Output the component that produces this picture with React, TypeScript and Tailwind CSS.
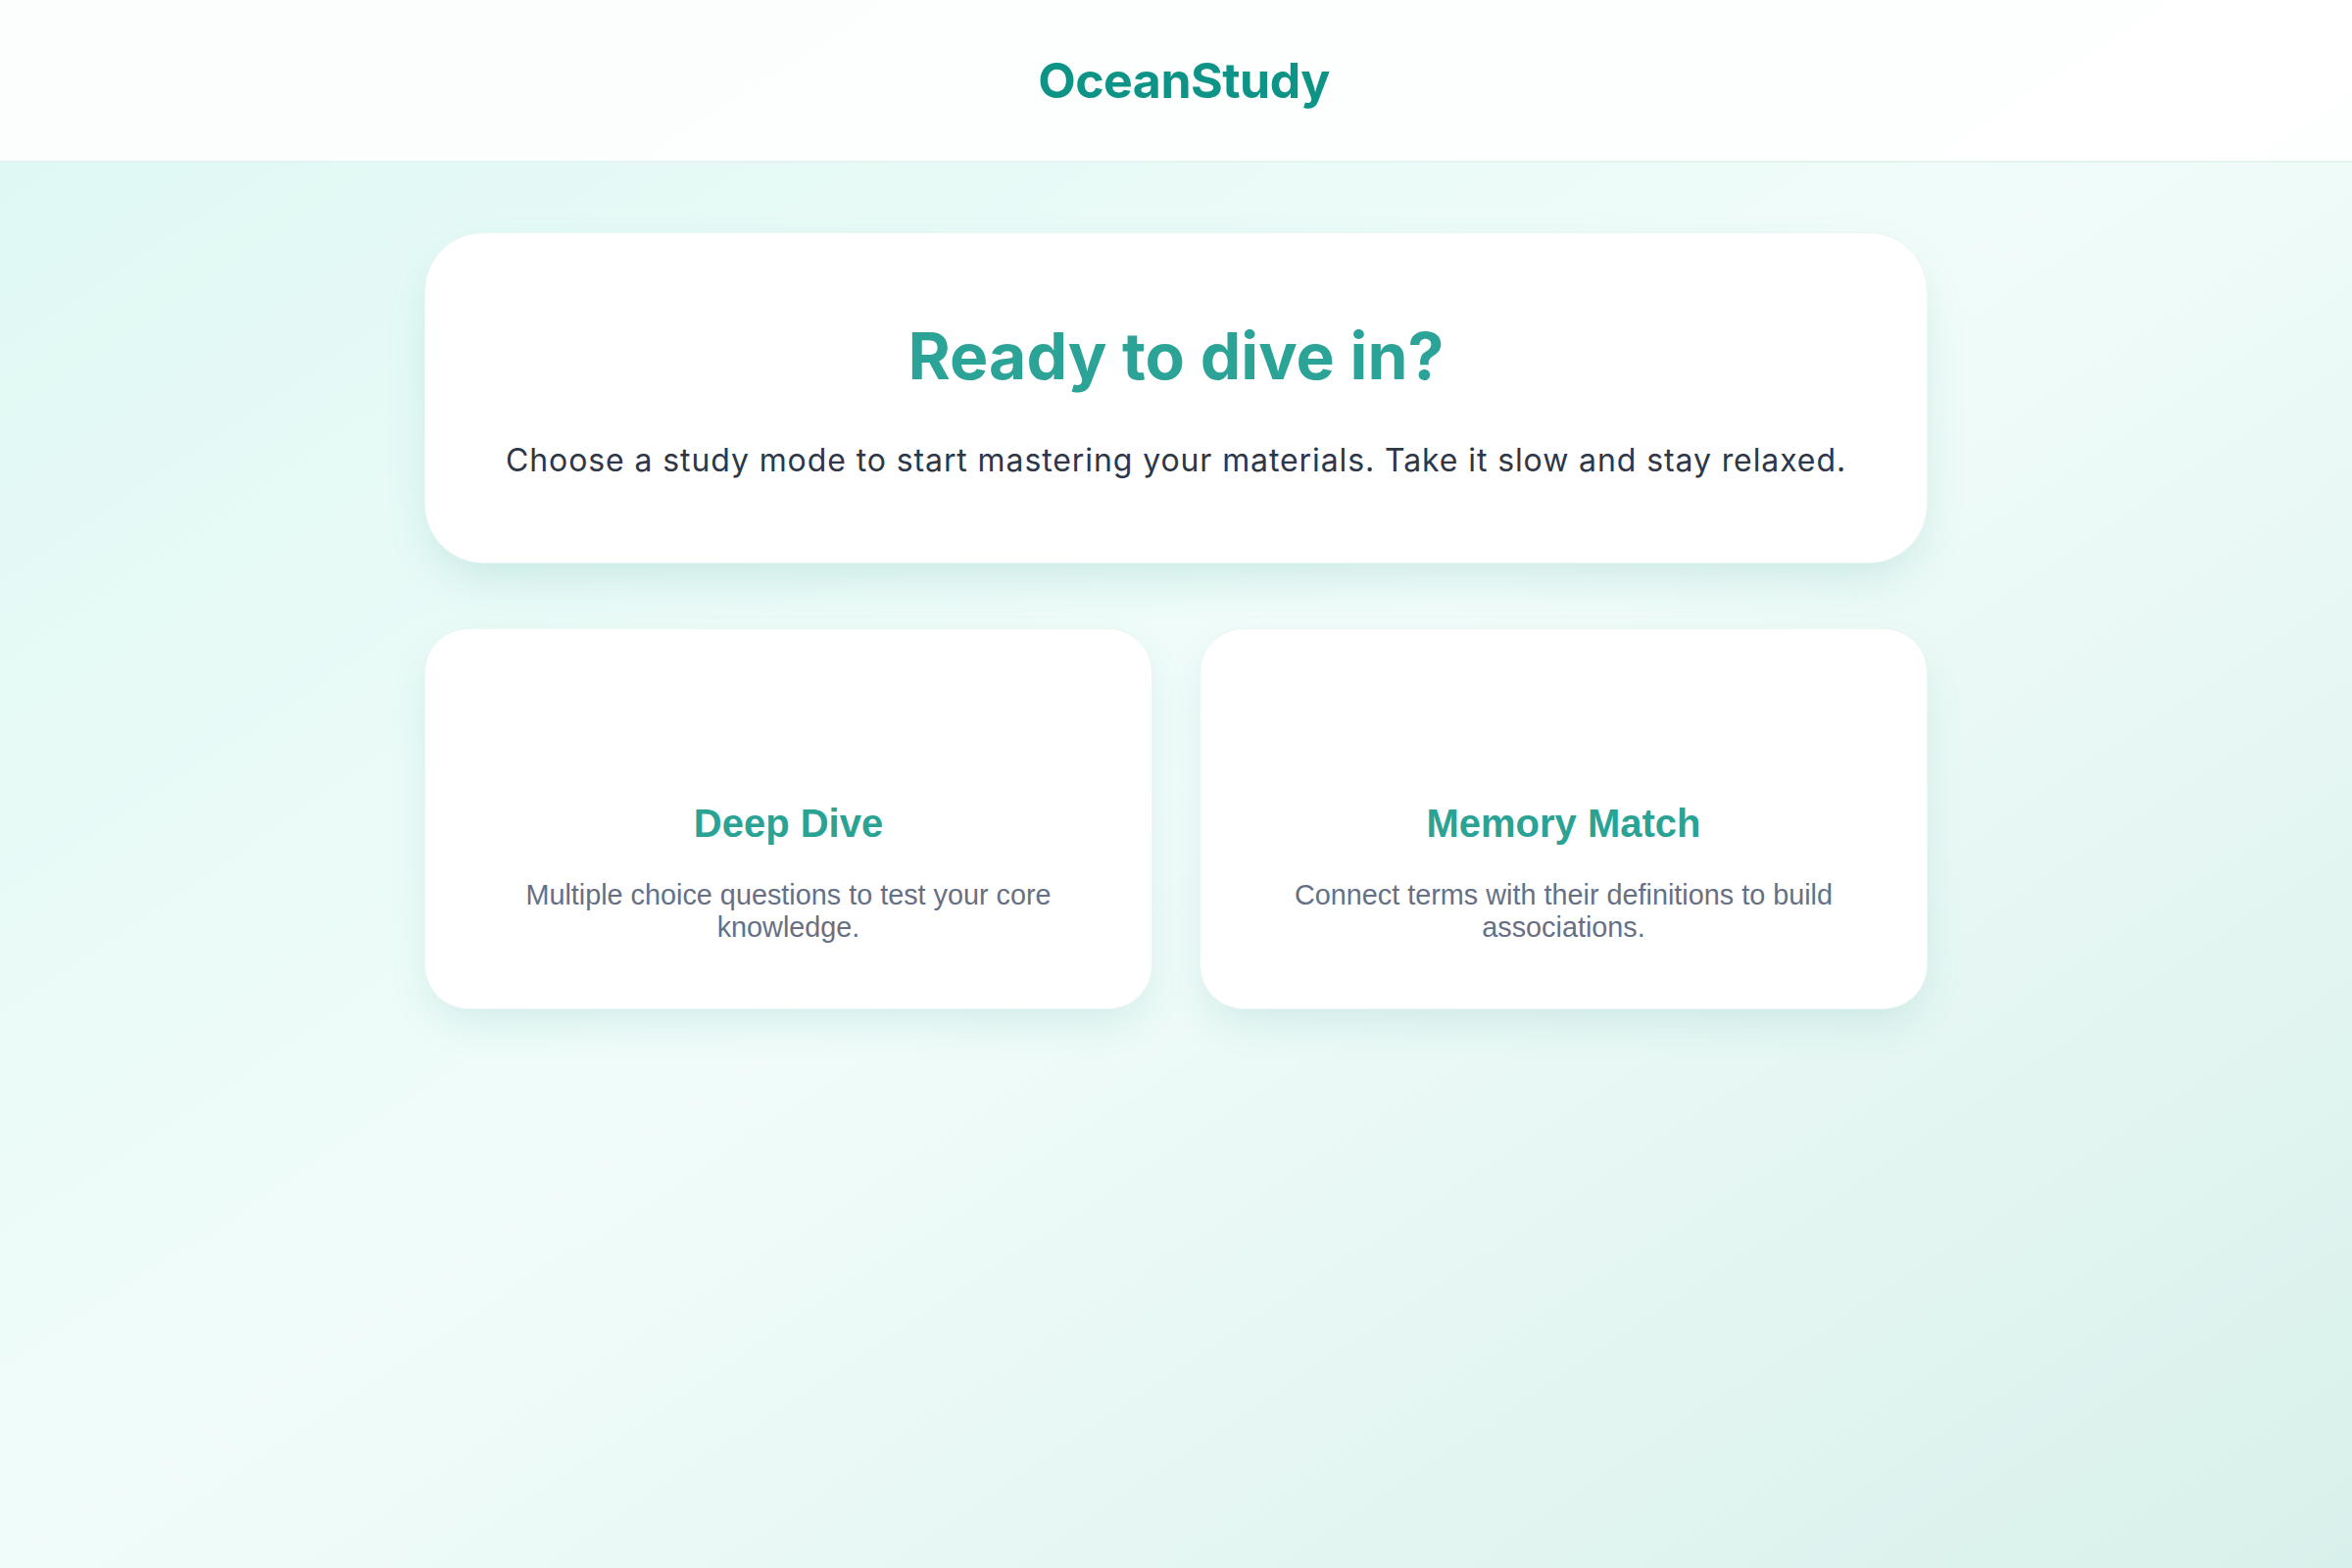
const poppinsLike = "font-['Inter',sans-serif]";

type Mode = {
  title: string;
  description: string;
};

const modes: Mode[] = [
  {
    title: "Deep Dive",
    description: "Multiple choice questions to test your core knowledge.",
  },
  {
    title: "Memory Match",
    description: "Connect terms with their definitions to build associations.",
  },
];

function ModeCard({ mode }: { mode: Mode }) {
  return (
    <button
      type="button"
      className="flex h-[389px] flex-col items-center rounded-[45px] border border-[#eaf6f4] bg-white px-12 pt-[172px] text-center shadow-[0_18px_45px_-10px_rgba(30,150,135,0.16)] font-['Liberation_Sans',Arial,sans-serif]"
    >
      <h3 className="text-[40px] font-bold leading-[1.3] text-[#2aa395]">{mode.title}</h3>
      <p className="mt-[31px] text-[28.8px] leading-[33px] text-[#667085]">{mode.description}</p>
    </button>
  );
}

export default function App() {
  return (
    <div className="min-h-[1600px] bg-gradient-to-br from-[#ddf8f3] via-[#f1fcfa] to-[#d8f0eb]">
      <header className="flex h-[166px] items-center justify-center border-b-2 border-[#e3f3f0] bg-white/90 pl-4">
        <span className={`${poppinsLike} text-[50px] font-bold tracking-[-0.5px] text-[#0e9486]`}>
          OceanStudy
        </span>
      </header>

      <main className="mx-auto w-[1534px] pt-[71px]">
        <section className="flex h-[338px] flex-col items-center rounded-[60px] border border-[#eaf6f4] bg-white pt-[86px] text-center shadow-[0_20px_50px_-12px_rgba(30,150,135,0.2)]">
          <h1 className={`${poppinsLike} text-[66px] font-bold leading-[1.2] text-[#2ba396]`}>
            Ready to dive in?
          </h1>
          <p className={`${poppinsLike} mt-[43px] text-[32px] leading-[1.5] tracking-[0.9px] text-[#2d3748]`}>
            Choose a study mode to start mastering your materials. Take it slow and stay relaxed.
          </p>
        </section>

        <div className="mt-[66px] grid grid-cols-2 gap-12">
          {modes.map((m) => (
            <ModeCard key={m.title} mode={m} />
          ))}
        </div>
      </main>
    </div>
  );
}
